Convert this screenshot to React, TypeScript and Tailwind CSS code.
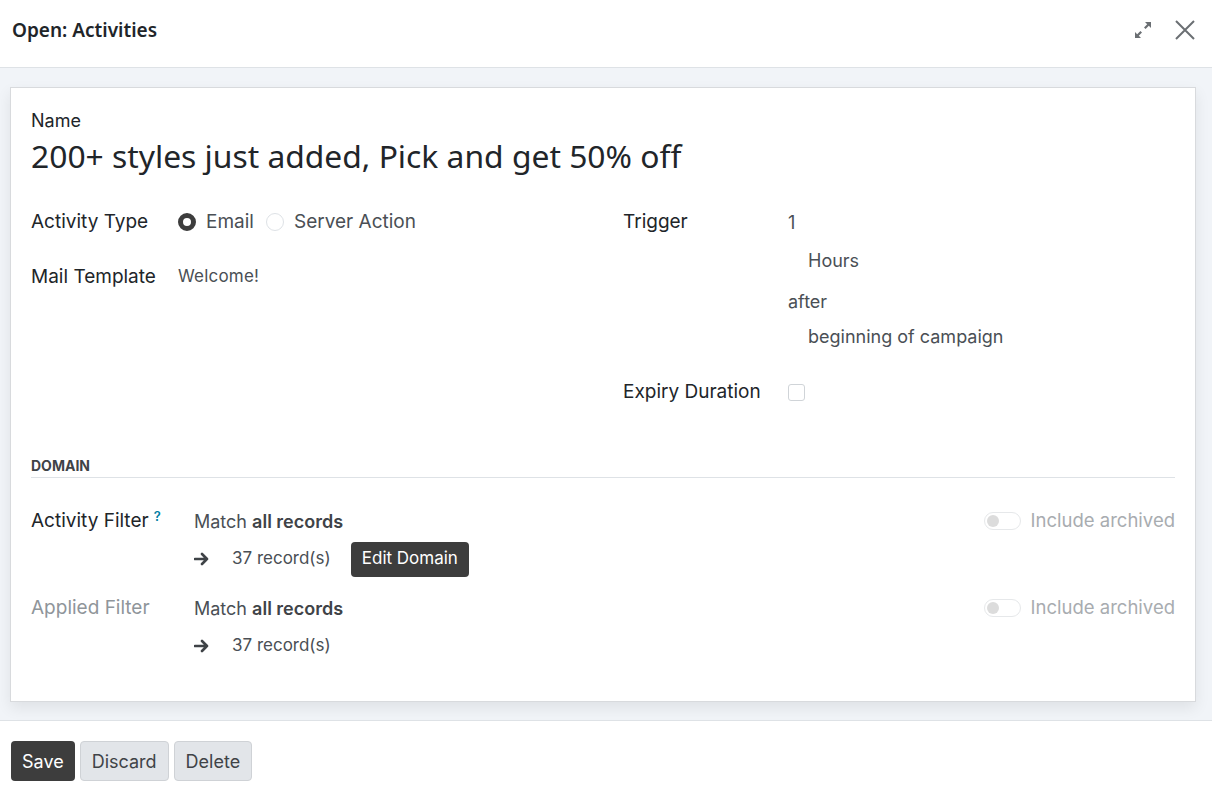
import React from "react";

const BODY = { fontFamily: "Inter, Roboto, 'Liberation Sans', sans-serif" };
const HEAD = { fontFamily: "'Noto Sans', 'Open Sans', sans-serif" };

function Radio({ checked, label }: { checked?: boolean; label: string }) {
  return (
    <span className="flex items-center gap-[10px]">
      {checked ? (
        <span className="w-[18px] h-[18px] rounded-full border-[5px] border-[#3d3d3d] bg-white" />
      ) : (
        <span className="w-[18px] h-[18px] rounded-full border border-[#dee2e6] bg-white" />
      )}
      <span className="text-[#4a4f55]">{label}</span>
    </span>
  );
}

function Toggle() {
  return (
    <span className="flex items-center gap-[10px] text-[#a8acb0] text-[18.5px]">
      <span className="w-[37px] h-[18px] rounded-full border border-[#e6e8ea] bg-white flex items-center px-[2px]">
        <span className="w-[12px] h-[12px] rounded-full bg-[#dcdcdc]" />
      </span>
      Include archived
    </span>
  );
}

function Arrow() {
  return (
    <svg width="16" height="14" viewBox="0 0 16 14" fill="none">
      <path d="M1 7h12M8 2l5 5-5 5" stroke="#3f4347" strokeWidth="2.6" strokeLinecap="round" strokeLinejoin="round" />
    </svg>
  );
}

function DomainRow({ label, muted, help, edit }: { label: string; muted?: boolean; help?: boolean; edit?: boolean }) {
  return (
    <div className="flex">
      <div className={`w-[163px] shrink-0 pt-[2px] text-[19px] ${muted ? "text-[#8f959a]" : "text-[#212529]"}`}>
        {label}
        {help && <sup className="ml-[5px] text-[#0180a5] text-[13px] font-semibold">?</sup>}
      </div>
      <div className="flex-1 flex flex-col">
        <div className="flex items-center justify-between h-[32px]">
          <span className="text-[18px] text-[#4a4f55]">
            Match <b className="font-semibold text-[#3f4347]">all records</b>
          </span>
          <Toggle />
        </div>
        <div className="flex items-center h-[42px] mt-[1px] text-[17px] text-[#4a4f55]">
          <Arrow />
          <span className="ml-[22px]">37 record(s)</span>
          {edit && (
            <span className="ml-[20px] bg-[#3d3d3d] text-white rounded-[4px] px-[11px] h-[35px] flex items-center text-[17px]">
              Edit Domain
            </span>
          )}
        </div>
      </div>
    </div>
  );
}

export default function App() {
  return (
    <div className="w-[1212px] h-[795px] bg-white flex flex-col text-[#212529]" style={BODY}>
      {/* Header */}
      <div className="h-[68px] shrink-0 flex items-center justify-between pl-[12px] pr-[16px] pb-[7px] border-b border-[#dee2e6]">
        <span className="text-[19px] font-semibold text-[#212529]" style={HEAD}>
          Open: Activities
        </span>
        <div className="flex items-center gap-[22px] text-[#6b6f73]">
          <svg width="18" height="18" viewBox="0 0 18 18" fill="#6b6f73">
            <path d="M11 1h6v6l-2.2-2.2-3.2 3.2-1.6-1.6 3.2-3.2z" />
            <path d="M7 17H1v-6l2.2 2.2 3.2-3.2 1.6 1.6-3.2 3.2z" />
          </svg>
          <svg width="22" height="22" viewBox="0 0 22 22">
            <path d="M2 2l18 18M20 2L2 20" stroke="#6b6f73" strokeWidth="2" />
          </svg>
        </div>
      </div>

      {/* Body */}
      <div className="h-[653px] shrink-0 bg-[#f1f4f8] border-b border-[#dee2e6] pt-[19px] px-[10px] pr-[16px]">
        <div className="h-[615px] bg-white border border-[#d8dadd] shadow-[0_6px_14px_rgba(0,0,0,0.08)] px-[20px] pt-[20px]">
          <div className="text-[18px] text-[#212529] leading-[26px]">Name</div>
          <div className="text-[31.8px] leading-[46px] text-[#212529] mt-[-1px]" style={HEAD}>
            200+ styles just added, Pick and get 50% off
          </div>

          <div className="grid grid-cols-[572px_1fr] gap-x-[20px] mt-[26px] h-[248px]">
            <div className="flex flex-col">
              <div className="flex items-center h-[34px] text-[19px]">
                <span className="w-[147px] shrink-0">Activity Type</span>
                <div className="flex items-center gap-[12px]">
                  <Radio checked label="Email" />
                  <Radio label="Server Action" />
                </div>
              </div>
              <div className="flex items-center h-[34px] mt-[21px]">
                <span className="w-[147px] shrink-0 text-[19px]">Mail Template</span>
                <span className="text-[17px] text-[#4a4f55] tracking-[0.2px]">Welcome!</span>
              </div>
            </div>
            <div className="flex flex-col">
              <div className="flex">
                <span className="w-[165px] shrink-0 text-[19px] h-[34px] flex items-center">Trigger</span>
                <div className="flex flex-col text-[18px] text-[#4a4f55]">
                  <span className="h-[34px] flex items-center">1</span>
                  <span className="h-[34px] flex items-center pl-[20px] mt-[4px]">Hours</span>
                  <span className="h-[34px] flex items-center mt-[7px]">after</span>
                  <span className="h-[34px] flex items-center pl-[20px] mt-[1px]">beginning of campaign</span>
                </div>
              </div>
              <div className="flex items-center h-[34px] mt-[22px]">
                <span className="w-[165px] shrink-0 text-[19px]">Expiry Duration</span>
                <span className="w-[17px] h-[17px] rounded-[3px] border border-[#d0d4d8] bg-white" />
              </div>
            </div>
          </div>

          {/* Domain section */}
          <div className="border-b border-[#dee2e6]">
            <span className="text-[14px] font-bold text-[#3f4347]">DOMAIN</span>
          </div>
          <div className="flex flex-col mt-[27px] gap-[12px]">
            <DomainRow label="Activity Filter" help edit />
            <DomainRow label="Applied Filter" muted />
          </div>
        </div>
      </div>

      {/* Footer */}
      <div className="flex items-center gap-[5px] pl-[11px] pt-[20px]">
        <button className="h-[40px] px-[11px] rounded-[4px] bg-[#3d3d3d] text-white text-[18px]">Save</button>
        <button className="h-[40px] px-[11px] rounded-[4px] bg-[#e2e5e9] border border-[#cfd2d6] text-[#3f4347] text-[18px]">
          Discard
        </button>
        <button className="h-[40px] px-[11px] rounded-[4px] bg-[#e2e5e9] border border-[#cfd2d6] text-[#3f4347] text-[18px]">
          Delete
        </button>
      </div>
    </div>
  );
}
